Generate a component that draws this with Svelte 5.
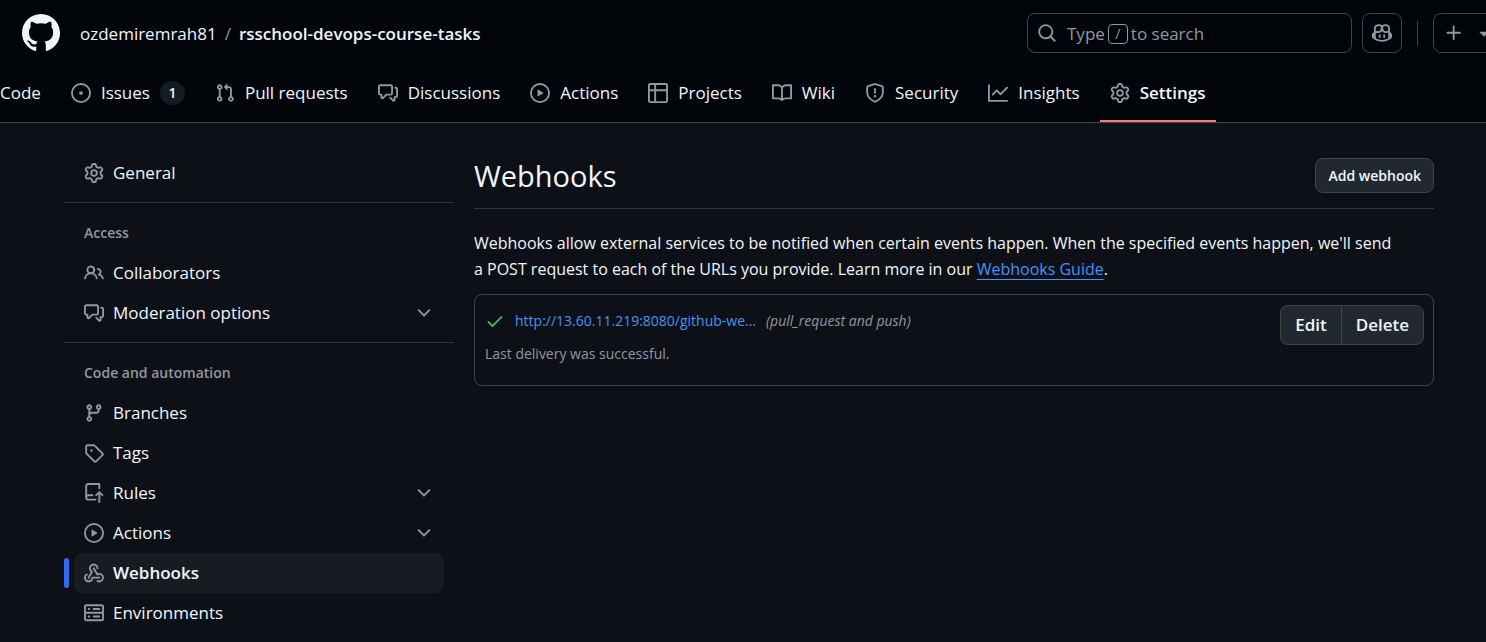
<script>
  const paths = {
    mark: 'M8 0c4.42 0 8 3.58 8 8a8.013 8.013 0 0 1-5.45 7.59c-.4.08-.55-.17-.55-.38 0-.27.01-1.13.01-2.2 0-.75-.25-1.23-.54-1.48 1.78-.2 3.65-.88 3.65-3.95 0-.88-.31-1.59-.82-2.15.08-.2.36-1.02-.08-2.12 0 0-.67-.22-2.2.82-.64-.18-1.32-.27-2-.27-.68 0-1.36.09-2 .27-1.53-1.03-2.2-.82-2.2-.82-.44 1.1-.16 1.92-.08 2.12-.51.56-.82 1.28-.82 2.15 0 3.06 1.86 3.75 3.64 3.95-.23.2-.44.55-.51 1.07-.46.21-1.61.55-2.33-.66-.15-.24-.6-.83-1.23-.82-.67.01-.27.38.01.53.34.19.73.9.82 1.13.16.45.68 1.31 2.69.94 0 .67.01 1.3.01 1.49 0 .21-.15.45-.55.38A7.995 7.995 0 0 1 0 8c0-4.42 3.58-8 8-8Z',
    issue: 'M8 9.5a1.5 1.5 0 1 0 0-3 1.5 1.5 0 0 0 0 3ZM8 0a8 8 0 1 1 0 16A8 8 0 0 1 8 0ZM1.5 8a6.5 6.5 0 1 0 13 0 6.5 6.5 0 0 0-13 0Z',
    pull: 'M1.5 3.25a2.25 2.25 0 1 1 3 2.122v5.256a2.251 2.251 0 1 1-1.5 0V5.372A2.25 2.25 0 0 1 1.5 3.25Zm5.677-.177L9.573.677A.25.25 0 0 1 10 .854V2.5h1A2.5 2.5 0 0 1 13.5 5v5.628a2.251 2.251 0 1 1-1.5 0V5a1 1 0 0 0-1-1h-1v1.646a.25.25 0 0 1-.427.177L7.177 3.427a.25.25 0 0 1 0-.354ZM3.75 2.5a.75.75 0 1 0 0 1.5.75.75 0 0 0 0-1.5Zm0 9.5a.75.75 0 1 0 0 1.5.75.75 0 0 0 0-1.5Zm8.25.75a.75.75 0 1 0 1.5 0 .75.75 0 0 0-1.5 0Z',
    discussion: 'M1.75 1h8.5c.966 0 1.75.784 1.75 1.75v5.5A1.75 1.75 0 0 1 10.25 10H7.061l-2.574 2.573A1.458 1.458 0 0 1 2 11.543V10h-.25A1.75 1.75 0 0 1 0 8.25v-5.5C0 1.784.784 1 1.75 1ZM1.5 2.75v5.5c0 .138.112.25.25.25h1a.75.75 0 0 1 .75.75v2.19l2.72-2.72a.749.749 0 0 1 .53-.22h3.5a.25.25 0 0 0 .25-.25v-5.5a.25.25 0 0 0-.25-.25h-8.5a.25.25 0 0 0-.25.25Zm13 2a.25.25 0 0 0-.25-.25h-.5a.75.75 0 0 1 0-1.5h.5c.966 0 1.75.784 1.75 1.75v5.5A1.75 1.75 0 0 1 14.25 12H14v1.543a1.458 1.458 0 0 1-2.487 1.03L9.22 12.28a.749.749 0 0 1 .326-1.275.749.749 0 0 1 .734.215l2.22 2.22v-2.19a.75.75 0 0 1 .75-.75h1a.25.25 0 0 0 .25-.25Z',
    play: 'M8 0a8 8 0 1 1 0 16A8 8 0 0 1 8 0ZM1.5 8a6.5 6.5 0 1 0 13 0 6.5 6.5 0 0 0-13 0Zm4.879-2.773 4.264 2.559a.25.25 0 0 1 0 .428l-4.264 2.559A.25.25 0 0 1 6 10.559V5.442a.25.25 0 0 1 .379-.215Z',
    table: 'M0 1.75C0 .784.784 0 1.75 0h12.5C15.216 0 16 .784 16 1.75v12.5A1.75 1.75 0 0 1 14.25 16H1.75A1.75 1.75 0 0 1 0 14.25ZM6.5 6.5v8h7.75a.25.25 0 0 0 .25-.25V6.5Zm8-1.5V1.75a.25.25 0 0 0-.25-.25H6.5V5Zm-13 1.5v7.75c0 .138.112.25.25.25H5v-8ZM5 5V1.5H1.75a.25.25 0 0 0-.25.25V5Z',
    book: 'M0 1.75A.75.75 0 0 1 .75 1h4.253c1.227 0 2.317.59 3 1.501A3.743 3.743 0 0 1 11.006 1h4.245a.75.75 0 0 1 .75.75v10.5a.75.75 0 0 1-.75.75h-4.507a2.25 2.25 0 0 0-1.591.659l-.622.621a.75.75 0 0 1-1.06 0l-.622-.621A2.25 2.25 0 0 0 5.258 13H.75a.75.75 0 0 1-.75-.75Zm7.251 10.324.004-5.073-.002-2.253A2.25 2.25 0 0 0 5.003 2.5H1.5v9h3.757a3.75 3.75 0 0 1 1.994.574ZM8.755 4.75l-.004 7.322a3.752 3.752 0 0 1 1.992-.572H14.5v-9h-3.495a2.25 2.25 0 0 0-2.25 2.25Z',
    shield: 'M7.467.133a1.748 1.748 0 0 1 1.066 0l5.25 1.68A1.75 1.75 0 0 1 15 3.48V7c0 1.566-.32 3.182-1.303 4.682-.983 1.498-2.585 2.813-5.032 3.855a1.697 1.697 0 0 1-1.33 0c-2.447-1.042-4.049-2.357-5.032-3.855C1.32 10.182 1 8.566 1 7V3.48a1.75 1.75 0 0 1 1.217-1.667Zm.61 1.429a.25.25 0 0 0-.153 0l-5.25 1.68a.25.25 0 0 0-.174.238V7c0 1.358.275 2.666 1.057 3.86.784 1.194 2.121 2.34 4.366 3.297a.196.196 0 0 0 .154 0c2.245-.956 3.582-2.104 4.366-3.298C13.225 9.666 13.5 8.36 13.5 7V3.48a.251.251 0 0 0-.174-.237l-5.25-1.68ZM8.75 4.75v3a.75.75 0 0 1-1.5 0v-3a.75.75 0 0 1 1.5 0ZM9 10.5a1 1 0 1 1-2 0 1 1 0 0 1 2 0Z',
    graph: 'M1.5 1.75V13.5h13.75a.75.75 0 0 1 0 1.5H.75a.75.75 0 0 1-.75-.75V1.75a.75.75 0 0 1 1.5 0Zm14.28 2.53-5.25 5.25a.75.75 0 0 1-1.06 0L7 7.06 4.28 9.78a.751.751 0 0 1-1.042-.018.751.751 0 0 1-.018-1.042l3.25-3.25a.75.75 0 0 1 1.06 0L10 7.94l4.72-4.72a.751.751 0 0 1 1.042.018.751.751 0 0 1 .018 1.042Z',
    gear: 'M8 0a8.2 8.2 0 0 1 .701.031C9.444.095 9.99.645 10.16 1.29l.288 1.107c.018.066.079.158.212.224.231.114.454.243.668.386.123.082.233.09.299.071l1.103-.303c.644-.176 1.392.021 1.82.63.27.385.506.792.704 1.218.315.675.111 1.422-.364 1.891l-.814.806c-.049.048-.098.147-.088.294.016.257.016.515 0 .772-.01.147.038.246.088.294l.814.806c.475.469.679 1.216.364 1.891a7.977 7.977 0 0 1-.704 1.217c-.428.61-1.176.807-1.82.63l-1.102-.302c-.067-.019-.177-.011-.3.071a5.909 5.909 0 0 1-.668.386c-.133.066-.194.158-.211.224l-.29 1.106c-.168.646-.715 1.196-1.458 1.26a8.006 8.006 0 0 1-1.402 0c-.743-.064-1.289-.614-1.458-1.26l-.289-1.106c-.018-.066-.079-.158-.212-.224a5.738 5.738 0 0 1-.668-.386c-.123-.082-.233-.09-.299-.071l-1.103.303c-.644.176-1.392-.021-1.82-.63a8.12 8.12 0 0 1-.704-1.218c-.315-.675-.111-1.422.363-1.891l.815-.806c.05-.048.098-.147.088-.294a6.214 6.214 0 0 1 0-.772c.01-.147-.038-.246-.088-.294l-.815-.806C.635 6.045.431 5.298.746 4.623a7.92 7.92 0 0 1 .704-1.217c.428-.61 1.176-.807 1.82-.63l1.102.302c.067.019.177.011.3-.071.214-.143.437-.272.668-.386.133-.066.194-.158.211-.224l.29-1.106C6.009.645 6.556.095 7.299.03 7.53.01 7.764 0 8 0Zm-.571 1.525c-.036.003-.108.036-.137.146l-.289 1.105c-.147.561-.549.967-.998 1.189-.173.086-.34.183-.5.29-.417.278-.97.423-1.529.27l-1.103-.303c-.109-.03-.175.016-.195.045-.22.312-.412.644-.573.99-.014.031-.021.11.059.19l.815.806c.411.406.562.957.53 1.456a4.709 4.709 0 0 0 0 .582c.032.499-.119 1.05-.53 1.456l-.815.806c-.081.08-.073.159-.059.19.162.346.353.677.573.989.02.03.085.076.195.046l1.102-.303c.56-.153 1.113-.008 1.53.27.161.107.328.204.501.29.447.222.85.629.997 1.189l.289 1.105c.029.109.101.143.137.146a6.6 6.6 0 0 0 1.142 0c.036-.003.108-.036.137-.146l.289-1.105c.147-.561.549-.967.998-1.189.173-.086.34-.183.5-.29.417-.278.97-.423 1.529-.27l1.103.303c.109.029.175-.016.195-.045.22-.313.411-.644.573-.99.014-.031.021-.11-.059-.19l-.815-.806c-.411-.406-.562-.957-.53-1.456a4.709 4.709 0 0 0 0-.582c-.032-.499.119-1.05.53-1.456l.815-.806c.081-.08.073-.159.059-.19a6.464 6.464 0 0 0-.573-.989c-.02-.03-.085-.076-.195-.046l-1.102.303c-.56.153-1.113.008-1.53-.27a4.44 4.44 0 0 0-.501-.29c-.447-.222-.85-.629-.997-1.189l-.289-1.105c-.029-.11-.101-.143-.137-.146a6.6 6.6 0 0 0-1.142 0ZM11 8a3 3 0 1 1-6 0 3 3 0 0 1 6 0ZM9.5 8a1.5 1.5 0 1 0-3.001.001A1.5 1.5 0 0 0 9.5 8Z',
    people: 'M2 5.5a3.5 3.5 0 1 1 5.898 2.549 5.508 5.508 0 0 1 3.034 4.084.75.75 0 1 1-1.482.235 4 4 0 0 0-7.9 0 .75.75 0 0 1-1.482-.236A5.507 5.507 0 0 1 3.102 8.05 3.493 3.493 0 0 1 2 5.5ZM11 4a3.001 3.001 0 0 1 2.22 5.018 5.01 5.01 0 0 1 2.56 3.012.749.749 0 0 1-.885.954.752.752 0 0 1-.549-.514 3.507 3.507 0 0 0-2.522-2.372.75.75 0 0 1-.574-.73v-.352a.75.75 0 0 1 .416-.672A1.5 1.5 0 0 0 11 5.5.75.75 0 0 1 11 4Zm-5.5-.5a2 2 0 1 0-.001 3.999A2 2 0 0 0 5.5 3.5Z',
    branch: 'M9.5 3.25a2.25 2.25 0 1 1 3 2.122V6A2.5 2.5 0 0 1 10 8.5H6a1 1 0 0 0-1 1v1.128a2.251 2.251 0 1 1-1.5 0V5.372a2.25 2.25 0 1 1 1.5 0v1.836A2.493 2.493 0 0 1 6 7h4a1 1 0 0 0 1-1v-.628A2.25 2.25 0 0 1 9.5 3.25Zm-6 0a.75.75 0 1 0 1.5 0 .75.75 0 0 0-1.5 0Zm8.25-.75a.75.75 0 1 0 0 1.5.75.75 0 0 0 0-1.5ZM4.25 12a.75.75 0 1 0 0 1.5.75.75 0 0 0 0-1.5Z',
    tag: 'M1 7.775V2.75C1 1.784 1.784 1 2.75 1h5.025c.464 0 .91.184 1.238.513l6.25 6.25a1.75 1.75 0 0 1 0 2.474l-5.026 5.026a1.75 1.75 0 0 1-2.474 0l-6.25-6.25A1.752 1.752 0 0 1 1 7.775Zm1.5 0c0 .066.026.13.073.177l6.25 6.25a.25.25 0 0 0 .354 0l5.025-5.025a.25.25 0 0 0 0-.354l-6.25-6.25a.25.25 0 0 0-.177-.073H2.75a.25.25 0 0 0-.25.25ZM6 5a1 1 0 1 1 0 2 1 1 0 0 1 0-2Z',
    repo: 'M1 2.5A2.5 2.5 0 0 1 3.5 0h8.75a.75.75 0 0 1 .75.75v3.5a.75.75 0 0 1-1.5 0V1.5h-8a1 1 0 0 0-1 1v6.708A2.493 2.493 0 0 1 3.5 9h3.25a.75.75 0 0 1 0 1.5H3.5a1 1 0 0 0 0 2h5.75a.75.75 0 0 1 0 1.5H3.5A2.5 2.5 0 0 1 1 11.5Zm13.23 7.79-1.23-1.22v6.18a.75.75 0 0 1-1.5 0V9.07l-1.23 1.22a.75.75 0 0 1-1.06-1.06l2.505-2.504a.75.75 0 0 1 1.06 0l2.505 2.504a.75.75 0 0 1-1.06 1.06Z',
    webhook: 'M5.5 4.25a2.25 2.25 0 0 1 4.5 0 .75.75 0 0 0 1.5 0 3.75 3.75 0 1 0-6.14 2.889l-2.272 4.258a.75.75 0 0 0 1.324.706L7 7.25a.75.75 0 0 0-.309-1.015A2.25 2.25 0 0 1 5.5 4.25ZM7.364 3.607a.75.75 0 0 1 1.03.257l2.608 4.349a3.75 3.75 0 1 1-.628 6.785.75.75 0 0 1 .752-1.299 2.25 2.25 0 1 0-.033-3.88.75.75 0 0 1-1.03-.256L7.107 4.636a.75.75 0 0 1 .257-1.03ZM2.9 8.776A.75.75 0 0 1 2.625 9.8 2.25 2.25 0 1 0 6 11.75a.75.75 0 0 1 .75-.751h5.5a.75.75 0 0 1 0 1.5H7.425a3.751 3.751 0 1 1-5.55-3.998.75.75 0 0 1 1.024.274Z',
    server: 'M1.75 1h12.5c.966 0 1.75.784 1.75 1.75v4c0 .372-.116.717-.314 1 .198.283.314.628.314 1v4a1.75 1.75 0 0 1-1.75 1.75H1.75A1.75 1.75 0 0 1 0 12.75v-4c0-.358.109-.707.314-1a1.739 1.739 0 0 1-.314-1v-4C0 1.784.784 1 1.75 1ZM1.5 2.75v4c0 .138.112.25.25.25h12.5a.25.25 0 0 0 .25-.25v-4a.25.25 0 0 0-.25-.25H1.75a.25.25 0 0 0-.25.25Zm.25 5.75a.25.25 0 0 0-.25.25v4c0 .138.112.25.25.25h12.5a.25.25 0 0 0 .25-.25v-4a.25.25 0 0 0-.25-.25ZM7 4.75A.75.75 0 0 1 7.75 4h4.5a.75.75 0 0 1 0 1.5h-4.5A.75.75 0 0 1 7 4.75ZM7.75 10h4.5a.75.75 0 0 1 0 1.5h-4.5a.75.75 0 0 1 0-1.5ZM3 4.75A.75.75 0 0 1 3.75 4h.5a.75.75 0 0 1 0 1.5h-.5A.75.75 0 0 1 3 4.75ZM3.75 10h.5a.75.75 0 0 1 0 1.5h-.5a.75.75 0 0 1 0-1.5Z',
    chevron: 'M12.78 5.22a.749.749 0 0 1 0 1.06l-4.25 4.25a.749.749 0 0 1-1.06 0L3.22 6.28a.749.749 0 1 1 1.06-1.06L8 8.939l3.72-3.719a.749.749 0 0 1 1.06 0Z',
    search: 'M10.68 11.74a6 6 0 0 1-7.922-8.982 6 6 0 0 1 8.982 7.922l3.04 3.04a.749.749 0 0 1-.326 1.275.749.749 0 0 1-.734-.215ZM11.5 7a4.499 4.499 0 1 0-8.997 0A4.499 4.499 0 0 0 11.5 7Z',
    copilot: 'M7.998 15.035c-4.562 0-7.873-2.914-7.998-3.749V9.338c.085-.628.677-1.686 1.588-2.065.013-.07.024-.143.036-.218.029-.183.06-.384.126-.612-.201-.508-.254-1.084-.254-1.656 0-.87.128-1.769.693-2.484.579-.733 1.494-1.124 2.724-1.261 1.206-.134 2.262.034 2.944.765.05.053.096.108.139.165.044-.057.094-.112.143-.165.682-.731 1.738-.899 2.944-.765 1.23.137 2.145.528 2.724 1.261.566.715.693 1.614.693 2.484 0 .572-.053 1.148-.254 1.656.066.228.098.429.126.612.012.076.024.148.037.218.924.385 1.522 1.471 1.591 2.095v1.872c0 .766-3.351 3.795-8.002 3.795Zm0-1.485c2.28 0 4.584-1.11 5.002-1.433V7.862l-.023-.116c-.49.21-1.075.291-1.727.291-1.146 0-2.059-.327-2.71-.991A3.222 3.222 0 0 1 8 6.303a3.24 3.24 0 0 1-.544.743c-.65.664-1.563.991-2.71.991-.652 0-1.236-.081-1.727-.291l-.023.116v4.255c.419.323 2.722 1.433 5.002 1.433ZM6.762 2.83c-.193-.206-.637-.413-1.682-.297-1.019.113-1.479.404-1.713.7-.247.312-.369.789-.369 1.554 0 .793.129 1.171.308 1.371.162.181.519.379 1.442.379.853 0 1.339-.235 1.638-.54.315-.322.527-.827.617-1.553.117-.935-.037-1.395-.241-1.614Zm4.155-.297c-1.044-.116-1.488.091-1.681.297-.204.219-.359.679-.242 1.614.091.726.303 1.231.618 1.553.299.305.784.54 1.638.54.922 0 1.28-.198 1.442-.379.179-.2.308-.578.308-1.371 0-.765-.123-1.242-.37-1.554-.233-.296-.693-.587-1.713-.7ZM6.25 9.037a.75.75 0 0 1 .75.75v1.501a.75.75 0 0 1-1.5 0V9.787a.75.75 0 0 1 .75-.75Zm4.25.75v1.501a.75.75 0 0 1-1.5 0V9.787a.75.75 0 0 1 1.5 0Z',
    plus: 'M7.75 2a.75.75 0 0 1 .75.75V7h4.25a.75.75 0 0 1 0 1.5H8.5v4.25a.75.75 0 0 1-1.5 0V8.5H2.75a.75.75 0 0 1 0-1.5H7V2.75A.75.75 0 0 1 7.75 2Z',
    caret: 'm4.427 7.427 3.396 3.396a.25.25 0 0 0 .354 0l3.396-3.396A.25.25 0 0 0 11.396 7H4.604a.25.25 0 0 0-.177.427Z',
    check: 'M13.78 4.22a.75.75 0 0 1 0 1.06l-7.25 7.25a.75.75 0 0 1-1.06 0L2.22 9.28a.751.751 0 0 1 .018-1.042.751.751 0 0 1 1.042-.018L6 10.94l6.72-6.72a.75.75 0 0 1 1.06 0Z'
  };

  const tabs = [
    { label: 'Code' },
    { label: 'Issues', icon: 'issue', count: 1 },
    { label: 'Pull requests', icon: 'pull' },
    { label: 'Discussions', icon: 'discussion' },
    { label: 'Actions', icon: 'play' },
    { label: 'Projects', icon: 'table' },
    { label: 'Wiki', icon: 'book' },
    { label: 'Security', icon: 'shield' },
    { label: 'Insights', icon: 'graph' },
    { label: 'Settings', icon: 'gear', current: true }
  ];

  const groups = [
    { items: [{ label: 'General', icon: 'gear' }] },
    {
      title: 'Access',
      items: [
        { label: 'Collaborators', icon: 'people' },
        { label: 'Moderation options', icon: 'discussion', expandable: true }
      ]
    },
    {
      title: 'Code and automation',
      items: [
        { label: 'Branches', icon: 'branch' },
        { label: 'Tags', icon: 'tag' },
        { label: 'Rules', icon: 'repo', expandable: true },
        { label: 'Actions', icon: 'play', expandable: true },
        { label: 'Webhooks', icon: 'webhook', current: true },
        { label: 'Environments', icon: 'server' }
      ]
    }
  ];
</script>

{#snippet icon(name)}
  <svg class="icon" viewBox="0 0 16 16" aria-hidden="true"><path fill-rule="evenodd" d={paths[name]} /></svg>
{/snippet}

<header>
  <div class="top">
    <a class="mark" href="#home" aria-label="Home">{@render icon('mark')}</a>
    <nav class="crumbs" aria-label="Breadcrumb">
      <a href="#owner">ozdemiremrah81</a>
      <span class="slash">/</span>
      <a class="repo" href="#repo">rsschool-devops-course-tasks</a>
    </nav>
    <div class="tools">
      <button class="search">
        {@render icon('search')}
        <span class="hint">Type <kbd>/</kbd> to search</span>
      </button>
      <button class="copilot" aria-label="Copilot">{@render icon('copilot')}</button>
      <span class="rule"></span>
      <button class="create" aria-label="Create new">{@render icon('plus')}{@render icon('caret')}</button>
    </div>
  </div>
  <nav class="tabs" aria-label="Repository">
    {#each tabs as tab}
      <a class="tab" class:current={tab.current} href="#{tab.label}" aria-current={tab.current ? 'page' : undefined}>
        {#if tab.icon}{@render icon(tab.icon)}{/if}
        <span>{tab.label}</span>
        {#if tab.count}<span class="count">{tab.count}</span>{/if}
      </a>
    {/each}
  </nav>
</header>

<div class="page">
  <nav class="side" aria-label="Settings">
    {#each groups as group}
      <section>
        {#if group.title}<h2>{group.title}</h2>{/if}
        <ul>
          {#each group.items as item}
            <li class:current={item.current}>
              {#if item.expandable}
                <button class="item" aria-expanded="false">
                  {@render icon(item.icon)}<span class="label">{item.label}</span>{@render icon('chevron')}
                </button>
              {:else}
                <a class="item" href="#{item.label}" aria-current={item.current ? 'page' : undefined}>
                  {@render icon(item.icon)}<span class="label">{item.label}</span>
                </a>
              {/if}
            </li>
          {/each}
        </ul>
      </section>
    {/each}
  </nav>

  <main>
    <div class="heading">
      <h1>Webhooks</h1>
      <button class="add">Add webhook</button>
    </div>
    <p class="intro">
      Webhooks allow external services to be notified when certain events happen. When the specified events happen,
      we'll send a POST request to each of the URLs you provide. Learn more in our <a href="#guide">Webhooks Guide</a>.
    </p>
    <div class="hook">
      <div class="info">
        <div class="line">
          {@render icon('check')}
          <a href="#hook">http://13.60.11.219:8080/github-we...</a>
          <em>(pull_request and push)</em>
        </div>
        <p>Last delivery was successful.</p>
      </div>
      <div class="actions">
        <button>Edit</button>
        <button>Delete</button>
      </div>
    </div>
  </main>
</div>

<style>
  :global(body) {
    background: #0d1117;
    color: #f0f6fc;
    font-family: 'Open Sans', 'Noto Sans', sans-serif;
    font-size: 17px;
    line-height: 26px;
    overflow: hidden;
  }

  a {
    color: inherit;
    text-decoration: none;
  }

  button {
    font: inherit;
    color: inherit;
    background: none;
    border: 0;
    margin: 0;
    padding: 0;
    cursor: pointer;
    box-sizing: border-box;
  }

  .icon {
    width: 20px;
    height: 20px;
    flex: none;
    fill: #9198a1;
    display: block;
  }

  header {
    background: #010409;
    border-bottom: 1px solid #3d444d;
    overflow: hidden;
  }

  .top {
    display: flex;
    align-items: center;
    height: 66px;
    padding-left: 22px;
  }

  .mark .icon {
    width: 38px;
    height: 38px;
    fill: #f0f6fc;
  }

  .crumbs {
    display: flex;
    gap: 8px;
    margin-left: 20px;
    padding-top: 2px;
    white-space: nowrap;
  }

  .slash {
    color: #9198a1;
  }

  .repo,
  .tab.current {
    font-weight: 600;
  }

  .tools {
    display: flex;
    align-items: center;
    margin-left: auto;
    margin-right: -18px;
  }

  .tools button {
    display: flex;
    align-items: center;
    height: 40px;
    border: 1px solid #3d444d;
    border-radius: 8px;
  }

  .tools .search {
    width: 325px;
    padding: 0 9px;
    gap: 10px;
    color: #9198a1;
    white-space: nowrap;
  }

  .hint {
    display: flex;
    align-items: center;
    gap: 3px;
    padding-top: 2px;
  }

  kbd {
    box-sizing: border-box;
    width: 20px;
    height: 20px;
    border: 1px solid #9198a1;
    border-radius: 4px;
    font-family: inherit;
    font-size: 14px;
    line-height: 18px;
    text-align: center;
  }

  .tools .copilot {
    width: 40px;
    justify-content: center;
    margin-left: 10px;
  }

  .rule {
    width: 1px;
    height: 25px;
    background: #3d444d;
    margin: 0 15px;
  }

  .tools .create {
    width: 71px;
    gap: 10px;
    padding: 0 10px;
  }

  .tabs {
    display: flex;
    gap: 10px;
    height: 56px;
  }

  .tab {
    display: flex;
    align-items: center;
    gap: 10px;
    padding: 0 10px 2px;
    white-space: nowrap;
  }

  .tab:first-child {
    padding-left: 0;
  }

  .tab.current {
    padding-bottom: 0;
    border-bottom: 2px solid #f78166;
  }

  .count {
    min-width: 25px;
    border-radius: 12px;
    background: #151b23;
    font-size: 14px;
    font-weight: 600;
    line-height: 24px;
    text-align: center;
  }

  .page {
    display: grid;
    grid-template-columns: 390px minmax(0, 1fr);
    gap: 20px;
    padding: 30px 52px 0 64px;
  }

  .side section + section {
    border-top: 1px solid #2f353d;
    margin-top: 9px;
    padding-top: 10px;
  }

  h2 {
    margin: 0 20px;
    font-size: 14px;
    font-weight: 600;
    line-height: 40px;
    color: #9198a1;
  }

  ul {
    list-style: none;
    margin: 0;
    padding: 0;
  }

  li {
    display: flex;
    align-items: center;
    padding: 0 10px;
  }

  .item {
    display: flex;
    align-items: center;
    flex: 1;
    gap: 9px;
    height: 40px;
    padding: 0 10px;
    border-radius: 8px;
    text-align: left;
  }

  .label {
    flex: 1;
  }

  li.current {
    padding-left: 0;
    gap: 5px;
  }

  li.current::before {
    content: '';
    width: 5px;
    height: 30px;
    border-radius: 8px;
    background: #316dee;
  }

  li.current .item {
    background: #171c23;
    font-weight: 600;
  }

  .heading {
    display: flex;
    justify-content: space-between;
    align-items: center;
    height: 45px;
    padding-bottom: 10px;
    border-bottom: 1px solid #2f353d;
  }

  h1 {
    margin: 0;
    font-size: 29px;
    font-weight: 400;
    line-height: 45px;
  }

  .add,
  .actions button {
    background: #212830;
    border: 1px solid #3d444d;
    border-radius: 8px;
    font-weight: 600;
  }

  .add {
    height: 35px;
    padding: 0 12px;
    font-size: 14px;
  }

  .intro {
    margin: 21px 0 12px;
    padding-right: 30px;
    font-size: 16px;
  }

  .intro a {
    color: #4493f8;
    text-decoration: underline;
    text-decoration-thickness: 1px;
    text-underline-offset: 4px;
  }

  .hook {
    display: flex;
    justify-content: space-between;
    align-items: flex-start;
    border: 1px solid #3d444d;
    border-radius: 8px;
    padding: 10px 9px 18px 10px;
    font-size: 14px;
  }

  .line {
    display: flex;
    align-items: center;
    gap: 10px;
    line-height: 32px;
  }

  .line a {
    color: #4493f8;
  }

  .line .icon {
    fill: #3fb950;
  }

  .line em,
  .info p {
    color: #9198a1;
  }

  .info p {
    margin: 4px 0 0;
  }

  .actions {
    display: flex;
  }

  .actions button {
    height: 40px;
    padding: 0 14px;
    font-size: 17px;
  }

  .actions button:first-child {
    border-right: 0;
    border-radius: 8px 0 0 8px;
  }

  .actions button:last-child {
    border-radius: 0 8px 8px 0;
  }
</style>
